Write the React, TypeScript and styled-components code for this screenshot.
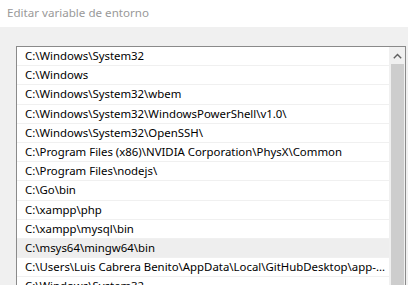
import React from "react";
import styled, { createGlobalStyle } from "styled-components";

const Global = createGlobalStyle`
  html, body { margin: 0; padding: 0; }
  body {
    width: 408px;
    height: 285px;
    overflow: hidden;
    background: #f0f0f0;
    font-family: "Noto Sans", "Open Sans", "Liberation Sans", sans-serif;
  }
`;

const Window = styled.div`
  width: 408px;
  height: 285px;
  display: flex;
  flex-direction: column;
  overflow: hidden;
  background: #f0f0f0;
`;

const TitleBar = styled.div`
  height: 27px;
  flex: none;
  background: #ffffff;
  display: flex;
  align-items: center;
  padding: 0 0 3px 7px;
  box-sizing: border-box;
  font-size: 11.6px;
  color: #999999;
`;

const Content = styled.div`
  flex: 1;
  padding: 19px 2px 0 16px;
  display: flex;
  min-height: 0;
  min-width: 0;
`;

const ListBox = styled.div`
  flex: 1;
  min-width: 0;
  display: flex;
  border: 1px solid #8a8a8a;
  border-bottom: none;
  background: #ffffff;
  min-height: 0;
  overflow: hidden;
`;

const Rows = styled.div`
  flex: 1;
  display: flex;
  flex-direction: column;
  min-width: 0;
`;

const Row = styled.div<{ $selected?: boolean }>`
  height: 18.2px;
  flex: none;
  border-bottom: 1px solid #f0f0f0;
  background: ${(p) => (p.$selected ? "#eeeeee" : "transparent")};
  padding-left: 8px;
  font-size: 11.4px;
  line-height: 18px;
  color: #000000;
  white-space: nowrap;
  overflow: hidden;
`;

const ScrollBar = styled.div`
  width: 16px;
  flex: none;
  display: flex;
  flex-direction: column;
  background: #f0f0f0;
`;

const ArrowButton = styled.div`
  height: 17px;
  flex: none;
  display: flex;
  align-items: center;
  justify-content: center;
`;

const Thumb = styled.div`
  flex: 1;
  margin: 0 1px 0 2px;
  background: #cdcdcd;
`;

const paths = [
  "C:\\Windows\\System32",
  "C:\\Windows",
  "C:\\Windows\\System32\\wbem",
  "C:\\Windows\\System32\\WindowsPowerShell\\v1.0\\",
  "C:\\Windows\\System32\\OpenSSH\\",
  "C:\\Program Files (x86)\\NVIDIA Corporation\\PhysX\\Common",
  "C:\\Program Files\\nodejs\\",
  "C:\\Go\\bin",
  "C:\\xampp\\php",
  "C:\\xampp\\mysql\\bin",
  "C:\\msys64\\mingw64\\bin",
  "C:\\Users\\Luis Cabrera Benito\\AppData\\Local\\GitHubDesktop\\app-...",
  "C:\\Windows\\System32",
];

export default function App() {
  return (
    <Window>
      <Global />
      <TitleBar>Editar variable de entorno</TitleBar>
      <Content>
        <ListBox>
          <Rows>
            {paths.map((p, i) => (
              <Row key={i} $selected={i === 10}>
                {p}
              </Row>
            ))}
          </Rows>
          <ScrollBar>
            <ArrowButton>
              <svg width="9" height="6" viewBox="0 0 9 6">
                <path d="M0.8 5.2 L4.5 1.5 L8.2 5.2" fill="none" stroke="#606060" strokeWidth="1.4" />
              </svg>
            </ArrowButton>
            <Thumb />
          </ScrollBar>
        </ListBox>
      </Content>
    </Window>
  );
}
